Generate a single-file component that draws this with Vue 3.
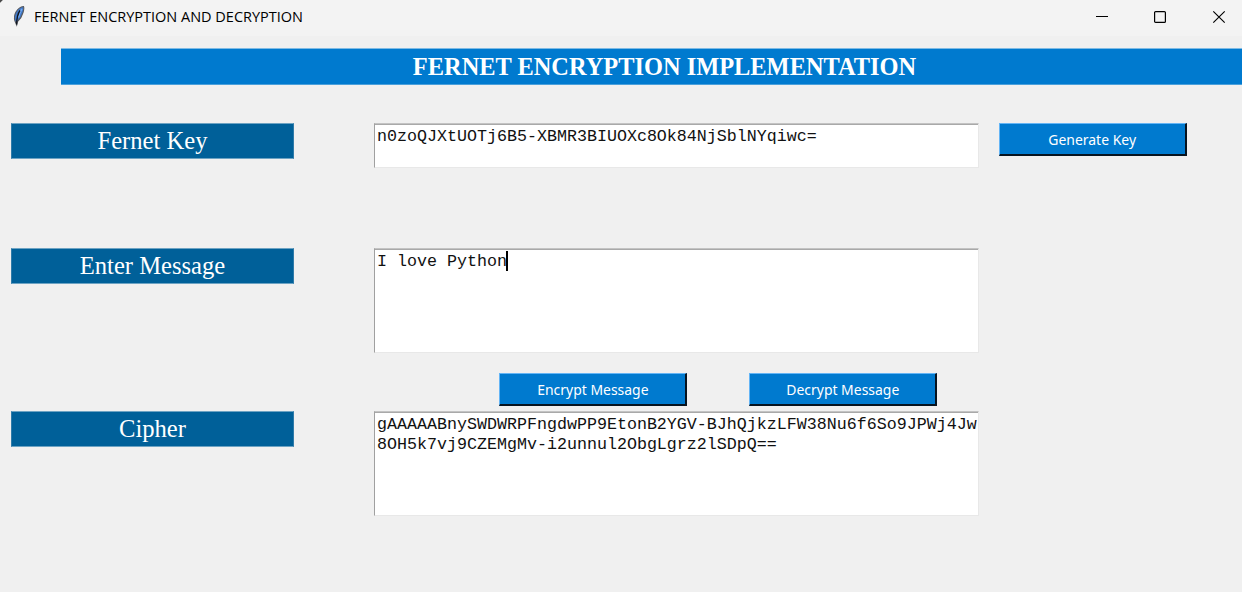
<script setup>
const rows = [
  { id: 'key', label: 'Fernet Key', lines: ['n0zoQJXtUOTj6B5-XBMR3BIUOXc8Ok84NjSblNYqiwc='], button: 'Generate Key' },
  { id: 'message', label: 'Enter Message', lines: ['I love Python'], caret: true },
  {
    id: 'cipher',
    label: 'Cipher',
    lines: [
      'gAAAAABnySWDWRPFngdwPP9EtonB2YGV-BJhQjkzLFW38Nu6f6So9JPWj4Jw',
      '8OH5k7vj9CZEMgMv-i2unnul2ObgLgrz2lSDpQ==',
    ],
  },
]
</script>

<template>
  <div class="window">
    <header class="titlebar">
      <svg class="feather" width="14" height="22" viewBox="0 0 14 22">
        <path d="M11.500 1.500 Q7 2 4 7 Q1.500 11.500 3 16 L4.700 20 L5.500 16.500 Q9.500 13 11 7.500 Q12.300 3 11.500 1.500Z" fill="#4078c8" stroke="#55585e" stroke-width="1.100" />
        <path d="M10 4 Q7 8 6.500 12.500" fill="none" stroke="#74aaf0" stroke-width="1.600" />
        <path d="M8 5.500 Q4.800 10 4.600 19.500" fill="none" stroke="#10141d" stroke-width="1.300" />
      </svg>
      <span class="title"><span>FERNET ENCRYPTION AND DECRYPTION</span></span>
      <div class="controls">
        <svg width="14" height="14" viewBox="0 0 14 14"><path d="M1 6.500H13" stroke="#000" /></svg>
        <svg width="14" height="14" viewBox="0 0 14 14"><rect x="1.600" y="1.600" width="10.800" height="10.800" rx="1" fill="none" stroke="#000" stroke-width="1.200" /></svg>
        <svg width="14" height="14" viewBox="0 0 14 14"><path d="M1.300 1.300L12.700 12.700M12.700 1.300L1.300 12.700" stroke="#000" stroke-width="1.150" /></svg>
      </div>
    </header>
    <h1 class="banner"><span>FERNET ENCRYPTION IMPLEMENTATION</span></h1>
    <main>
      <template v-for="row in rows" :key="row.id">
        <div v-if="row.id === 'cipher'" class="actions">
          <button class="encrypt"><span>Encrypt Message</span></button>
          <button class="decrypt"><span>Decrypt Message</span></button>
        </div>
        <section class="row" :class="row.id">
          <label class="label"><span>{{ row.label }}</span></label>
          <div class="field">
            <div v-for="line in row.lines" :key="line" class="line">{{ line }}<i v-if="row.caret" class="caret"></i></div>
          </div>
          <button v-if="row.button" class="generate"><span>{{ row.button }}</span></button>
        </section>
      </template>
    </main>
  </div>
</template>

<style>
body { margin: 0; background: #f0f0f0; }
</style>

<style scoped>
* { box-sizing: border-box; }
.window { width: 1242px; height: 592px; overflow: hidden; background: #f0f0f0; }
.titlebar { height: 36px; display: flex; align-items: flex-start; background: linear-gradient(135deg, #4a4a4a 1.5px, #f3f3f3 2.5px); padding-left: 12px; }
.feather { margin-top: 5px; flex: none; }
.title { margin-left: 8px; font: 15.200px/33px "Open Sans", sans-serif; color: #000; white-space: nowrap; }
.title span { display: inline-block; transform: scaleX(0.954); transform-origin: left; }
.controls { display: flex; gap: 44px; margin: 10px 16px 0 auto; }
.controls svg { display: block; }
.controls svg:nth-child(2) { margin-right: 1px; }
.banner {
  margin: 12px 0 0 61px; height: 37px; background: #007acf; color: #fff;
  border-top: 1px solid #7ebbe5; border-bottom: 1px solid #4ba0db;
  font: bold 24.400px/35px "Liberation Serif", serif; text-align: center; padding-left: 26px; white-space: nowrap;
}
main { display: flex; flex-direction: column; padding: 38px 0 0 11px; }
.row { display: grid; grid-template-columns: 283px 605px 188px; align-items: start; }
.row > .field { margin-left: 80px; margin-right: -80px; }
.row > .generate { margin-left: 100px; }
.label {
  height: 36px; background: #006099; color: #fff; text-align: center;
  border: 1px solid #6da3c3; border-left-color: #2f7ba9; border-right-color: #2f7ba9;
  font: 24.600px/34px "Liberation Serif", serif;
}
.field {
  height: 45px; background: #fff; border: 1px solid #e8e8e8;
  border-top: 1px solid #c3c3c3; border-left: 1px solid #a0a0a0; box-shadow: inset 0 1px #a9a9a9;
  padding: 3px 0 0 2px; font: 16.667px/20px "Liberation Mono", monospace; color: #111; white-space: pre;
}
.key { height: 125px; }
.message { height: 125px; }
.message .field, .cipher .field { height: 105px; }
.message .line { position: relative; }
.caret { position: absolute; left: 129px; top: -1px; width: 2px; height: 20px; background: #000; }
.actions { display: flex; gap: 62px; height: 38px; padding-left: 488px; }
button {
  width: 188px; height: 33px; margin: 0; padding: 0; border: 1px solid #64b5f6; border-right: 2px solid #071420;
  border-bottom: 2px solid #071420; border-radius: 0; background: #007acf; color: #fff;
  font: 15px/29px "Noto Sans", sans-serif; text-align: center; white-space: nowrap;
}
button span { display: inline-block; transform: scaleX(0.93); }
</style>
